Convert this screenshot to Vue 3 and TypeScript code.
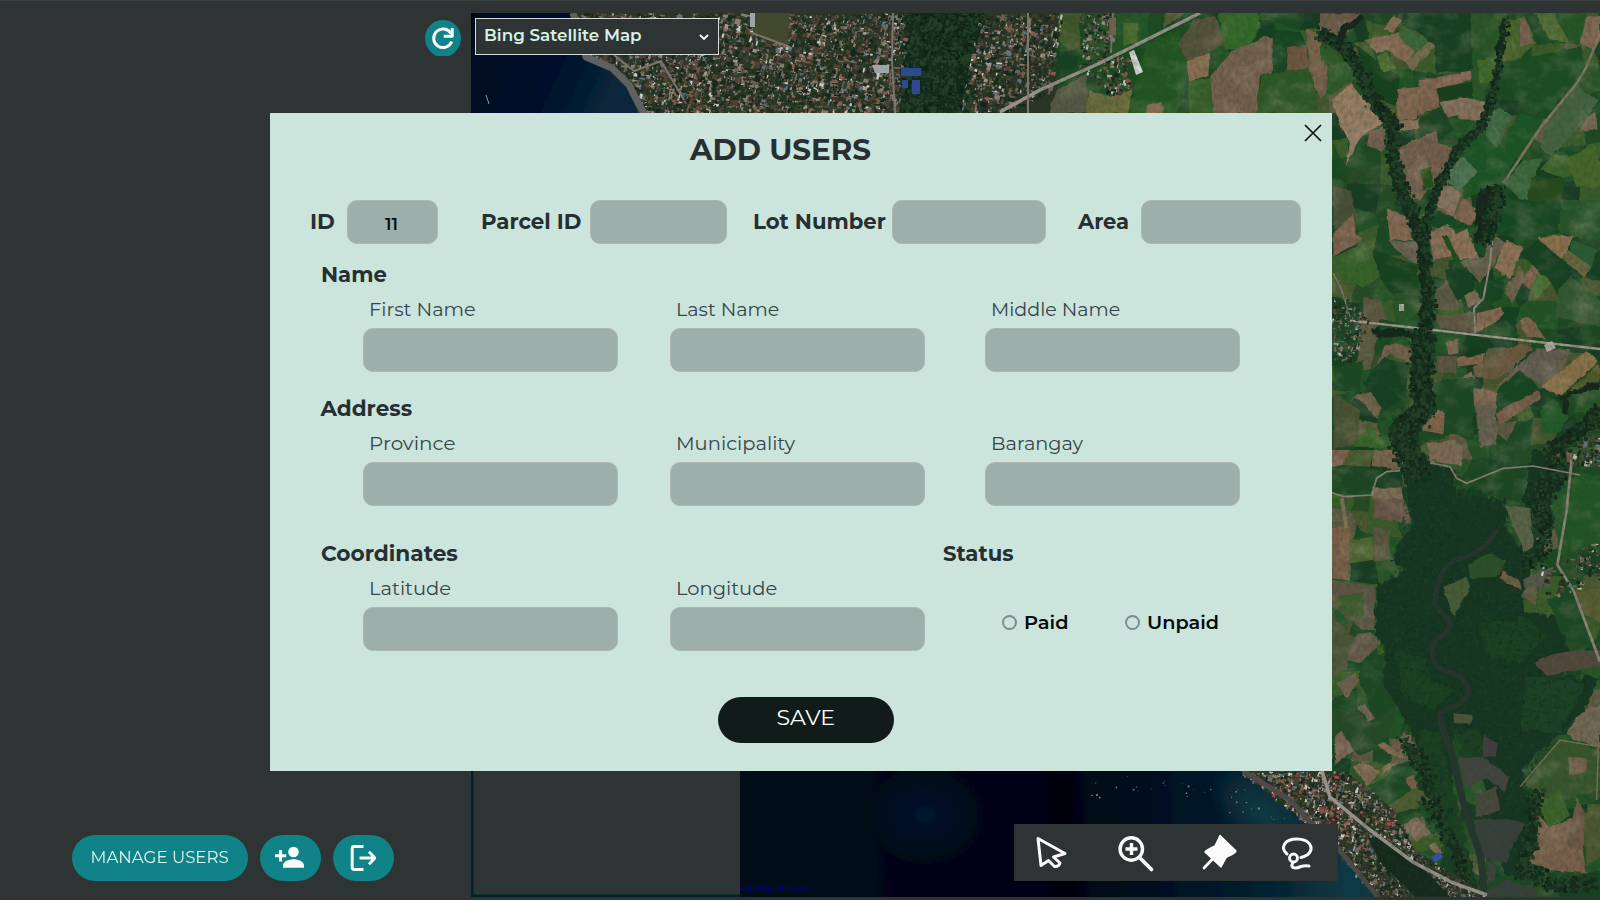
<script setup lang="ts">
import { ref, type Directive } from 'vue'

interface Patch { c: string; p: string }
interface Line { c: string; w: number; p: string }
interface Speck { c: string; d: string }
type Pt = [number, number]

// Stretches a label horizontally to a given advance width.
const vFit: Directive<HTMLElement, number> = {
  mounted(el, binding) {
    const natural = el.offsetWidth
    if (natural > 0) el.style.transform = `scaleX(${binding.value / natural})`
  },
}

const topFields = [
  { label: 'ID', w: 25, cls: 'f-id', value: '11' },
  { label: 'Parcel ID', w: 100, cls: 'f-parcel', value: '' },
  { label: 'Lot Number', w: 133, cls: 'f-lot', value: '' },
  { label: 'Area', w: 51, cls: 'f-area', value: '' },
]
const nameFields = [
  { label: 'First Name', w: 107 },
  { label: 'Last Name', w: 103 },
  { label: 'Middle Name', w: 129 },
]
const addressFields = [
  { label: 'Province', w: 87 },
  { label: 'Municipality', w: 119 },
  { label: 'Barangay', w: 92 },
]
const coordFields = [
  { label: 'Latitude', w: 82 },
  { label: 'Longitude', w: 101 },
]
const status = ref('')

function rng(seed: number): () => number {
  let s = seed
  return () => {
    s = (s * 1664525 + 1013904223) % 4294967296
    return s / 4294967296
  }
}
function parse(p: string): Pt[] {
  return p.split(' ').map((q) => q.split(',').map(Number) as Pt)
}
function inside(x: number, y: number, poly: Pt[]): boolean {
  let hit = false
  for (let i = 0, j = poly.length - 1; i < poly.length; j = i++) {
    const [xi, yi] = poly[i]
    const [xj, yj] = poly[j]
    if (yi > y !== yj > y && x < ((xj - xi) * (y - yi)) / (yj - yi) + xi) hit = !hit
  }
  return hit
}
const roofs = ['#a0958c', '#6f6052', '#c9cac8', '#8c5b50', '#534b42', '#1a2a1a', '#16241a', '#62707a', '#705e4b', '#22351f', '#877c70', '#304028', '#18291b', '#20321f', '#2c3a26', '#4f4234']
const leaves = ['#12291b', '#172e1e', '#0f2116', '#1c3a22', '#142c1c', '#213f27']
function scatter(area: string, count: number, seed: number, colours: string[], size: number): Speck[] {
  const poly = parse(area)
  const xs = poly.map((q) => q[0])
  const ys = poly.map((q) => q[1])
  const x0 = Math.min(...xs), x1 = Math.max(...xs), y0 = Math.min(...ys), y1 = Math.max(...ys)
  const r = rng(seed)
  const out = colours.map((c) => ({ c, d: '' }))
  for (let i = 0; i < count; i++) {
    const x = x0 + r() * (x1 - x0)
    const y = y0 + r() * (y1 - y0)
    const w = size * (0.3 + r() * r() * 1.5)
    const h = size * (0.3 + r() * r() * 1.5)
    const k = Math.floor(r() * colours.length)
    if (inside(x, y, poly)) out[k].d += `M${x.toFixed(1)} ${y.toFixed(1)}l${w.toFixed(1)} ${(h * 0.3).toFixed(1)}l${(-h * 0.3).toFixed(1)} ${h.toFixed(1)}l${(-w).toFixed(1)} ${(-h * 0.3).toFixed(1)}z`
  }
  return out
}
function along(path: string, spread: number, count: number, seed: number, colours: string[], size: number): Speck[] {
  const pts = parse(path)
  const r = rng(seed)
  const out = colours.map((c) => ({ c, d: '' }))
  for (let i = 0; i < count; i++) {
    const t = r() * (pts.length - 1)
    const n = Math.floor(t)
    const f = t - n
    const x = pts[n][0] + (pts[n + 1][0] - pts[n][0]) * f + (r() + r() - 1) * spread
    const y = pts[n][1] + (pts[n + 1][1] - pts[n][1]) * f + (r() + r() - 1) * spread
    const s = size * (0.4 + r() * 0.8)
    out[Math.floor(r() * colours.length)].d += `M${x.toFixed(1)} ${y.toFixed(1)}h${s.toFixed(1)}v${s.toFixed(1)}h${(-s).toFixed(1)}z`
  }
  return out
}
// Irregular quilt of crops under the main field shapes.
function quilt(x0: number, y0: number, x1: number, y1: number, cell: number, seed: number): Patch[] {
  const r = rng(seed)
  const crops = ['#1c4824', '#164020', '#225228', '#2b5529', '#1a4a26', '#3a5c2c', '#183c20', '#5e5a42', '#274b28', '#46562f', '#1d4a22']
  const cols = Math.ceil((x1 - x0) / cell) + 1
  const rows = Math.ceil((y1 - y0) / cell) + 1
  const g: Pt[][] = []
  for (let j = 0; j <= rows; j++) {
    g.push([])
    for (let i = 0; i <= cols; i++) g[j].push([x0 + (i - 0.5 + (r() - 0.5) * 0.7) * cell, y0 + (j - 0.5 + (r() - 0.5) * 0.7) * cell])
  }
  const out: Patch[] = []
  for (let j = 0; j < rows; j++) {
    for (let i = 0; i < cols; i++) {
      const c = crops[Math.floor(r() * crops.length)]
      out.push({ c, p: [g[j][i], g[j][i + 1], g[j + 1][i + 1], g[j + 1][i]].map((q) => q.map((v) => v.toFixed(1)).join(',')).join(' ') })
    }
  }
  return out
}
const quiltPatches = quilt(1040, 13, 1600, 897, 23, 41)

// Farmland between the upper edge and the middle of the east side (units of 1/3 px).
const northFields: Patch[] = [
  { c: '#6d5a48', p: '0,40 120,40 60,130 0,100' },
  { c: '#2f5a2a', p: '0,120 80,170 110,230 40,280 0,300' },
  { c: '#785c4b', p: '0,180 25,200 20,270 0,300' },
  { c: '#17431f', p: '100,130 240,230 230,320 160,290 130,200' },
  { c: '#8a6c57', p: '220,45 246,62 215,98 190,88' },
  { c: '#876955', p: '136,120 180,112 240,96 288,150 262,190 200,150 170,160' },
  { c: '#3e6837', p: '240,70 340,135 290,160 236,110' },
  { c: '#746c50', p: '286,160 330,125 347,138 275,216 258,190' },
  { c: '#4a6a2c', p: '168,170 200,155 226,206 190,218' },
  { c: '#134121', p: '250,40 450,40 460,210 350,220 345,135 245,65' },
  { c: '#2b5528', p: '450,40 560,40 540,170 460,160' },
  { c: '#40692c', p: '470,180 530,170 520,240 480,250' },
  { c: '#4b652f', p: '560,60 620,50 650,130 570,200 545,190' },
  { c: '#78624e', p: '600,60 620,50 640,130 600,140' },
  { c: '#526c36', p: '640,40 700,40 750,128 680,120' },
  { c: '#1d4822', p: '610,40 645,40 690,120 650,125' },
  { c: '#275527', p: '700,40 800,40 780,140 750,125' },
  { c: '#806652', p: '795,50 840,45 840,120 825,150 778,135' },
  { c: '#1b4d22', p: '540,190 780,140 800,200 660,370 560,260' },
  { c: '#846753', p: '232,268 300,260 290,355 232,362' },
  { c: '#806250', p: '300,240 352,234 360,320 292,348' },
  { c: '#8b6a57', p: '352,232 450,212 452,242 354,265' },
  { c: '#87705c', p: '362,306 430,285 495,310 490,360 412,358 412,345 375,355' },
  { c: '#16401d', p: '352,266 456,245 460,290 358,305' },
  { c: '#8b6f59', p: '232,362 294,357 298,385 234,395' },
  { c: '#1a4520', p: '300,350 370,330 400,390 350,430 290,400' },
  { c: '#987c63', p: '36,300 92,250 124,290 160,310 190,335 195,370 150,390 125,410 110,430 95,470 78,500 84,460 90,430 60,370' },
  { c: '#756050', p: '150,390 190,380 204,440 180,455 140,440' },
  { c: '#1e4b22', p: '40,430 75,500 120,430 180,450 180,495 40,520' },
  { c: '#765f4d', p: '235,440 350,392 355,430 395,440 380,500 330,560 300,602 270,590 240,510' },
  { c: '#254f1f', p: '300,510 335,500 340,560 310,570' },
  { c: '#3a673f', p: '500,350 540,322 580,350 530,445 497,415' },
  { c: '#1d5427', p: '430,440 495,400 530,445 600,340 670,360 540,550 430,600' },
  { c: '#4b7251', p: '375,520 430,472 474,515 420,575 372,545' },
  { c: '#88715f', p: '350,610 372,552 425,578 400,650 350,615' },
  { c: '#846551', p: '400,650 430,595 478,630 450,680' },
  { c: '#174620', p: '330,620 400,655 430,690 400,700 330,680' },
  { c: '#446340', p: '690,350 770,255 835,300 800,360 690,470 660,440' },
  { c: '#756852', p: '800,350 830,340 832,390 780,395' },
  { c: '#3b673d', p: '550,550 610,480 665,475 620,615' },
  { c: '#3d642d', p: '660,510 700,460 745,465 770,520 730,535' },
  { c: '#264c1f', p: '635,530 730,535 720,600 620,615' },
  { c: '#46662b', p: '740,480 820,430 840,480 840,560 770,560' },
  { c: '#174622', p: '540,590 700,610 720,700 600,720 525,700' },
  { c: '#26542b', p: '720,600 840,600 840,720 720,700' },
  { c: '#856752', p: '200,625 270,650 280,720 210,720' },
  { c: '#6a6050', p: '205,720 290,725 315,790 290,795 230,750' },
  { c: '#4b5037', p: '40,560 90,570 112,650 40,690' },
  { c: '#7e614d', p: '40,700 100,640 105,700 130,720 40,770' },
  { c: '#38632b', p: '45,770 135,728 180,830 125,862 50,810' },
  { c: '#19431f', p: '160,750 290,795 300,880 210,880 180,830' },
  { c: '#8a6e58', p: '328,700 380,672 402,690 430,760 340,780' },
  { c: '#8e7157', p: '395,710 440,685 478,775 420,780' },
  { c: '#204b22', p: '365,710 380,705 415,775 405,785' },
  { c: '#665e4c', p: '420,785 490,770 510,700 560,730 480,850' },
  { c: '#8e7157', p: '520,800 560,722 610,740 570,838' },
  { c: '#6e5c48', p: '550,880 600,795 615,830 580,908' },
  { c: '#8d6f4e', p: '655,712 760,705 745,750 720,780' },
  { c: '#66653e', p: '720,780 745,750 815,800 795,836' },
  { c: '#2b5b30', p: '760,720 830,750 815,800 750,755' },
  { c: '#7f5b48', p: '603,845 635,795 660,815 630,865' },
  { c: '#4b6f36', p: '630,865 660,815 692,848 650,900' },
  { c: '#154020', p: '600,760 655,720 790,830 720,900 690,840' },
  { c: '#345930', p: '715,865 755,830 840,900 840,980 705,950' },
  { c: '#5b5943', p: '340,870 405,840 415,930 350,930' },
  { c: '#174021', p: '370,810 440,800 465,860 410,900' },
  { c: '#836b58', p: '430,885 465,868 480,900 450,925' },
  { c: '#174520', p: '510,850 560,820 540,900 490,915' },
  { c: '#856753', p: '470,940 545,920 553,940 510,980 470,998' },
  { c: '#605843', p: '350,950 460,935 465,1000 360,985' },
  { c: '#80644e', p: '600,960 630,950 675,1015 620,1010' },
  { c: '#244e25', p: '490,985 560,960 600,1010 480,1005' },
  { c: '#5b5741', p: '130,890 180,900 200,960 130,955' },
  { c: '#745f4e', p: '190,1040 230,1030 270,1045 278,1090 210,1060 165,1115' },
  { c: '#154020', p: '190,1070 270,1090 260,1190 180,1240 130,1150' },
  { c: '#1d4822', p: '40,1100 130,1080 120,1180 40,1170' },
  { c: '#705f4c', p: '100,1190 150,1172 185,1225 170,1255 130,1210' },
  { c: '#485230', p: '40,1180 120,1230 110,1330 40,1350' },
  { c: '#3b652c', p: '100,1340 145,1272 205,1340' },
  { c: '#806450', p: '380,1030 415,1015 415,1060 385,1065' },
  { c: '#143a1c', p: '418,1042 490,1042 480,1070 416,1070' },
  { c: '#82654d', p: '412,1074 495,1062 493,1090 412,1100' },
  { c: '#5b5643', p: '350,1068 412,1068 408,1120 350,1112' },
  { c: '#6c583f', p: '458,1100 600,1030 645,1045 530,1140 465,1130' },
  { c: '#846d55', p: '380,1165 455,1115 465,1135' },
  { c: '#706452', p: '520,1175 600,1110 590,1085 625,1060' },
  { c: '#625b4f', p: '590,1105 650,1045 750,1050 730,1110 665,1160' },
  { c: '#8b7049', p: '665,1160 800,1050 835,1085 720,1190' },
  { c: '#535b2b', p: '745,1178 835,1090 840,1140' },
  { c: '#1a4822', p: '320,1150 460,1130 460,1330 350,1270' },
  { c: '#806752', p: '460,1165 530,1172 525,1260 462,1220' },
  { c: '#686050', p: '465,1215 527,1215 530,1330 480,1343' },
  { c: '#7a5c48', p: '530,1240 655,1172 662,1195 537,1275' },
  { c: '#164420', p: '530,1170 600,1115 660,1170 540,1230' },
  { c: '#245a2a', p: '660,1230 700,1195 745,1250 720,1300 670,1300' },
  { c: '#84634e', p: '303,1290 355,1225 375,1240 370,1303' },
]
const northRoads: Line[] = [
  { c: '#81765f', w: 8, p: '840,100 800,200 770,250 660,385 550,550' },
  { c: '#91897c', w: 6, p: '520,690 510,790 490,895 462,925 466,1000' },
  { c: '#a39b90', w: 7, p: '90,962 300,985 480,1006 840,1047' },
  { c: '#887e70', w: 4, p: '40,820 65,870 90,950' },
]
const northWoods: Line[] = [
  { c: '#15291b', w: 34, p: '0,100 80,145 130,230 150,290 215,370 215,470 240,560 275,640 310,740 320,900 310,990' },
  { c: '#15291b', w: 17, p: '555,50 535,190 510,300 480,380 410,440 360,540 320,640 310,740' },
  { c: '#15291b', w: 60, p: '310,1000 300,1100 310,1220 240,1290 250,1350' },
  { c: '#15281b', w: 24, p: '160,1000 240,1000 310,1010' },
  { c: '#15281b', w: 40, p: '700,1350 780,1290 840,1230' },
  { c: '#15281b', w: 18, p: '740,1240 730,1190 840,1150' },
  { c: '#15281b', w: 20, p: '60,130 70,90 130,50' },
  { c: '#12261a', w: 50, p: '525,555 520,600 505,650 485,730' },
  { c: '#12261a', w: 34, p: '495,575 480,680' },
]

// Farmland, forest and marsh in the lower half of the east side (units of 1/3 px).
const southFields: Patch[] = [
  { c: '#7e624d', p: '36,0 90,0 70,45 36,50' },
  { c: '#4a5c30', p: '90,0 160,0 150,50 70,45' },
  { c: '#7a634f', p: '160,0 260,0 240,60 155,48' },
  { c: '#7f6955', p: '320,-20 400,-30 430,0 425,45 330,35' },
  { c: '#1e4723', p: '36,55 190,55 155,130 115,140 36,128' },
  { c: '#7d6957', p: '160,112 245,115 250,150 157,145' },
  { c: '#69564c', p: '160,145 255,150 275,222 160,205' },
  { c: '#7b6049', p: '36,232 90,225 80,390 36,385' },
  { c: '#48622e', p: '90,270 160,260 160,330 90,340' },
  { c: '#5a573f', p: '160,230 210,240 205,330 160,335' },
  { c: '#5e5645', p: '36,390 165,405 165,540 130,540 36,470' },
  { c: '#405c2d', p: '50,440 130,430 130,510 60,490' },
  { c: '#665b49', p: '100,560 150,545 180,580 120,640 80,630' },
  { c: '#4e5538', p: '36,500 100,560 80,660 36,680' },
  { c: '#706250', p: '50,700 105,670 118,690 80,745' },
  { c: '#1c4824', p: '120,640 200,600 210,760 170,800 120,700' },
  { c: '#746452', p: '115,770 135,762 162,805 145,818' },
  { c: '#274826', p: '50,780 115,775 190,880 120,920 60,850' },
  { c: '#7d6552', p: '45,860 65,845 100,900 45,945' },
  { c: '#826a56', p: '98,950 130,935 180,965 140,1005' },
  { c: '#866b55', p: '172,885 190,875 230,905 260,895 250,925 220,920' },
  { c: '#866b55', p: '183,955 215,933 225,945 193,967' },
  { c: '#75604e', p: '212,895 255,850 285,860 250,900' },
  { c: '#1b4822', p: '145,1010 240,950 300,960 310,1010 200,1070' },
  { c: '#7d604d', p: '256,985 280,975 298,1010 278,1025' },
  { c: '#505c30', p: '200,1070 290,1010 350,1055 230,1090' },
  { c: '#786451', p: '248,1125 290,1098 330,1150 290,1180' },
  { c: '#1f4b26', p: '290,1050 350,1060 390,1150 330,1150' },
  { c: '#836e50', p: '325,1190 345,1173 365,1205 350,1215' },
  { c: '#1d4723', p: '400,100 440,60 620,50 610,160 480,130' },
  { c: '#225428', p: '690,130 750,70 840,75 840,270 720,320' },
  { c: '#6c5747', p: '700,0 760,0 750,60 705,60' },
  { c: '#1c4a25', p: '680,450 760,420 820,600 740,560' },
  { c: '#585b32', p: '765,425 840,415 840,520 790,490' },
  { c: '#736654', p: '740,850 770,800 800,775 840,765 840,890 760,870' },
  { c: '#38562d', p: '610,1000 720,870 840,900 840,1020 700,1060' },
  { c: '#786150', p: '745,920 800,925 800,970 745,975' },
  { c: '#3d642b', p: '650,1060 720,1020 750,1100 690,1130' },
  { c: '#7a604b', p: '650,1090 690,1130 770,1100 800,1270 690,1260 610,1230' },
  { c: '#705946', p: '770,1040 810,1120 790,1200 740,1190' },
  { c: '#4e5830', p: '790,1090 840,1080 840,1220 800,1250' },
]
// Clearings and wetland that lie inside the forest.
const marsh: Patch[] = [
  { c: '#2f5029', p: '445,340 510,310 560,330 530,380 450,385' },
  { c: '#6e6044', p: '545,360 600,395 605,420 540,385' },
  { c: '#4a5c38', p: '370,410 440,380 450,410 400,500' },
  { c: '#57594a', p: '610,385 700,350 690,410 612,410' },
  { c: '#5a6347', p: '556,165 630,175 640,290 615,305 580,230' },
  { c: '#55493e', p: '645,640 690,615 740,605 840,600 840,650 760,660 680,675' },
  { c: '#42453f', p: '415,925 485,920 570,980 555,1025 500,985 430,1010' },
  { c: '#443e42', p: '490,855 535,885 530,920 485,920' },
  { c: '#49493d', p: '465,1035 530,1010 540,1080 470,1105' },
  { c: '#39403b', p: '460,1110 550,1105 620,1120 580,1180 560,1240 480,1220' },
  { c: '#3f453c', p: '500,1230 528,1250 525,1290 505,1300' },
  { c: '#39413a', p: '500,1320 560,1290 640,1310 650,1340 500,1340' },
  { c: '#50553a', p: '400,790 458,795 450,820 403,820' },
]
const southWoods: Patch[] = [
  { c: '#173421', p: '250,50 310,0 340,45 400,60 410,140 555,150 560,230 600,300 690,250 610,160 640,0 700,0 690,240 610,410 610,480 700,500 750,600 650,640 700,680 840,680 800,770 700,870 610,950 610,1020 650,1060 650,1200 620,1240 650,1290 560,1280 520,1180 500,1010 400,840 400,1050 480,1340 440,1320 320,1000 290,880 250,800 190,700 200,600 165,540 170,410 260,360 215,330 275,220' },
  { c: '#1a4023', p: '390,830 480,840 500,930 430,920' },
  { c: '#1b4225', p: '620,680 740,690 800,700 720,850 600,840' },
  { c: '#1a3f24', p: '480,520 620,500 680,560 600,640 500,620' },
  { c: '#1b4024', p: '230,600 310,620 340,700 400,720 340,780 250,740' },
  { c: '#1b4024', p: '290,840 360,850 420,1100 460,1300 420,1280 330,1000' },
]
const southRoads: Line[] = [
  { c: '#8b8474', w: 5, p: '36,128 72,140 155,135 170,85 200,65 240,62' },
  { c: '#8d8373', w: 5, p: '330,38 390,50 410,85 440,100 550,55 640,48 780,75' },
  { c: '#8d8676', w: 8, p: '755,30 740,180 712,345 760,420 840,635' },
  { c: '#7d7258', w: 12, p: '65,145 80,235' },
  { c: '#7d7258', w: 4, p: '600,1010 720,870 835,890 830,1050' },
]
const townAreas: [string, number, number][] = [
  ['575,13 905,13 900,113 645,113 620,70 590,55', 5200, 4],
  ['980,13 1062,13 1050,90 1000,113 960,113', 1300, 4],
  ['1080,13 1112,13 1110,60 1080,68', 220, 3.4],
  ['1085,70 1130,50 1130,85 1112,95', 260, 3.4],
  ['1240,771 1345,771 1394,810 1415,850 1490,897 1378,897 1338,852 1290,810', 5600, 3.4],
  ['1332,300 1345,295 1370,320 1352,360 1332,360', 220, 3.4],
  ['1565,560 1600,535 1600,580', 130, 3],
  ['1540,565 1585,580 1575,595 1545,595', 50, 4],
  ['1572,450 1600,450 1600,464 1572,462', 60, 4],
  ['1590,425 1600,418 1600,450 1575,450', 50, 4],
]
const town = townAreas.flatMap(([a, n, s], i) => scatter(a, n, 77 + i * 31, roofs, s))
const reds = scatter('1240,771 1345,771 1400,830 1405,870 1300,812', 260, 9, ['#b04648', '#c9c6c4', '#8f3d3d'], 3)
const topForest = scatter('900,13 985,13 975,113 900,113', 2200, 5, leaves, 4)
const canopy = scatter('1405,466 1420,450 1455,470 1505,500 1520,560 1525,610 1560,650 1590,680 1560,730 1525,780 1530,880 1500,830 1480,760 1450,730 1450,800 1470,890 1430,830 1405,740 1380,640 1380,590 1400,560', 9000, 12, ['#163120', '#193a23', '#1c4026', '#173522', '#1b3d24'], 3)
const edgeTrees = [
  ...along('1320,33 1347,48 1363,77 1370,97 1392,123 1392,157 1400,187 1412,213 1423,247 1427,300 1423,330', 9, 1100, 3, leaves, 3.4),
  ...along('1505,17 1498,63 1490,100 1480,127 1457,147 1440,180 1427,213 1423,247', 5, 550, 4, leaves, 3),
  ...along('1423,333 1420,367 1423,407 1400,430 1403,450 1415,470', 15, 1000, 6, leaves, 3.4),
  ...along('1497,190 1492,210 1484,240', 10, 260, 19, leaves, 3.4),
  ...along('1553,450 1560,470 1535,500 1540,540 1530,560', 14, 700, 8, leaves, 3.4),
  ...along('1554,450 1580,430 1600,410', 9, 260, 15, leaves, 3.4),
  ...along('1402,740 1420,760 1430,800 1455,850 1465,885', 9, 450, 16, leaves, 3.4),
  ...along('1535,790 1530,840 1520,870 1560,885 1590,880', 10, 500, 17, leaves, 3.4),
]
const boats = along('1090,785 1150,790 1220,795 1260,810 1290,815', 20, 36, 21, ['#7b8c90'], 1.5)
</script>

<template>
  <div class="page">
    <svg class="map" viewBox="471 13 1129 884" preserveAspectRatio="none">
      <defs>
        <linearGradient id="seaTop" x1="0" y1="0" x2="1" y2="0.3">
          <stop offset="0" stop-color="#02061c" />
          <stop offset="0.6" stop-color="#030f2a" />
          <stop offset="1" stop-color="#08283a" />
        </linearGradient>
        <linearGradient id="seaLow" gradientUnits="userSpaceOnUse" x1="740" y1="860" x2="1345" y2="830">
          <stop offset="0" stop-color="#020f18" />
          <stop offset="0.25" stop-color="#020616" />
          <stop offset="0.55" stop-color="#010511" />
          <stop offset="0.75" stop-color="#031426" />
          <stop offset="0.9" stop-color="#062733" />
          <stop offset="1" stop-color="#0b3845" />
        </linearGradient>
        <radialGradient id="shoal"><stop offset="0" stop-color="#0e3b44" /><stop offset="1" stop-color="#0e3b44" stop-opacity="0" /></radialGradient>
        <radialGradient id="deepBlue"><stop offset="0" stop-color="#03142c" /><stop offset="1" stop-color="#03142c" stop-opacity="0" /></radialGradient>
        <filter id="rough" x="-5%" y="-5%" width="110%" height="110%">
          <feTurbulence type="fractalNoise" baseFrequency="0.12" numOctaves="2" seed="4" />
          <feDisplacementMap in="SourceGraphic" scale="10" xChannelSelector="R" yChannelSelector="G" />
        </filter>
        <filter id="edges" x="-2%" y="-2%" width="104%" height="104%">
          <feTurbulence type="fractalNoise" baseFrequency="0.09" numOctaves="2" seed="14" />
          <feDisplacementMap in="SourceGraphic" scale="4" xChannelSelector="R" yChannelSelector="G" />
          <feGaussianBlur stdDeviation="0.5" />
        </filter>
        <filter id="soft"><feGaussianBlur stdDeviation="0.6" /></filter>
        <filter id="grain" x="0" y="0" width="100%" height="100%">
          <feTurbulence type="fractalNoise" baseFrequency="0.25 0.18" numOctaves="4" seed="8" />
          <feColorMatrix values="0 0 0 0 0.02  0 0 0 0 0.05  0 0 0 0 0.02  1.1 0 0 0 -0.38" />
        </filter>
        <filter id="soil" x="0" y="0" width="100%" height="100%">
          <feTurbulence type="fractalNoise" baseFrequency="0.035 0.05" numOctaves="4" seed="31" />
          <feColorMatrix values="0 0 0 0 0.42  0 0 0 0 0.37  0 0 0 0 0.27  2.2 0 0 0 -1.05" />
        </filter>
      </defs>

      <rect x="471" y="13" width="1129" height="884" fill="#1c4524" />
      <g filter="url(#edges)">
        <polygon v-for="(f, i) in quiltPatches" :key="i" :points="f.p" :fill="f.c" />
        <polygon points="560,5 1062,5 1060,120 630,120" fill="#2a3628" />
        <polygon points="690,55 706,58 700,120 684,120 694,80" fill="#5b4939" />
        <polygon points="900,5 985,5 975,120 900,120" fill="#162c1c" />
        <g transform="translate(800 0) scale(0.33333)">
          <polygon points="775,20 1240,20 1240,340 770,340" fill="#1f4c23" />
          <polygon points="780,20 840,20 840,140 815,155 775,120" fill="#40592b" />
          <polygon points="765,155 835,150 830,200 760,230" fill="#173f22" />
          <polygon points="770,270 860,220 865,340 745,340" fill="#575844" />
          <polygon points="865,270 930,290 995,265 985,340 860,340" fill="#6b6c3a" />
          <polygon points="940,20 1050,20 1040,120 940,160" fill="#235425" />
          <polygon points="970,68 1015,70 1010,130 970,140" fill="#44692c" />
          <polygon points="1040,130 1140,90 1165,210 1130,340 985,340" fill="#205624" />
          <polygon points="1100,20 1180,20 1090,85" fill="#595b39" />
          <polygon points="1180,60 1245,45 1270,130 1225,160 1160,180 1135,130" fill="#57523b" />
          <polygon points="1157,180 1230,160 1225,225 1168,245" fill="#876c50" />
          <polygon points="1250,25 1370,25 1385,80 1330,150 1275,150" fill="#356a29" />
          <polygon points="1230,230 1290,160 1390,110 1445,125 1415,225 1380,230 1370,340 1240,340" fill="#74614d" />
          <polygon points="1165,245 1230,235 1240,340 1170,340" fill="#37602b" />
          <polygon points="1420,90 1500,95 1520,135 1465,140 1460,215 1415,225" fill="#164620" />
          <polygon points="1465,140 1520,135 1525,200 1460,212" fill="#6f5442" />
          <polygon points="1385,225 1530,205 1560,340 1370,340" fill="#2e5926" />
          <polygon points="1520,90 1560,100 1560,300 1530,215" fill="#7a624e" />
          <polygon points="1040,320 1085,305 1090,340 1040,340" fill="#85694f" />
        </g>
        <g transform="translate(1320 0) scale(0.33333)">
          <polygon v-for="(f, i) in northFields" :key="i" :points="f.p" :fill="f.c" />
        </g>
        <g transform="translate(1320 450) scale(0.33333)">
          <polygon v-for="(f, i) in southFields" :key="i" :points="f.p" :fill="f.c" />
        </g>
      </g>
      <rect x="1060" y="13" width="540" height="884" filter="url(#soil)" opacity="0.35" />
      <g filter="url(#rough)">
        <g transform="translate(1320 0) scale(0.33333)">
          <polyline v-for="(l, i) in northWoods" :key="i" :points="l.p" :stroke="l.c" :stroke-width="l.w" fill="none" />
        </g>
        <g transform="translate(1320 450) scale(0.33333)">
          <polygon v-for="(f, i) in southWoods" :key="i" :points="f.p" :fill="f.c" />
        </g>
      </g>
      <g filter="url(#soft)">
        <g transform="translate(1320 0) scale(0.33333)">
          <polyline v-for="(l, i) in northRoads" :key="i" :points="l.p" :stroke="l.c" :stroke-width="l.w" fill="none" />
        </g>
        <g><path v-for="(s, i) in topForest" :key="i" :d="s.d" :fill="s.c" /></g>
        <g opacity="0.7"><path v-for="(s, i) in canopy" :key="i" :d="s.d" :fill="s.c" /></g>
        <g><path v-for="(s, i) in edgeTrees" :key="i" :d="s.d" :fill="s.c" /></g>
      </g>
      <g filter="url(#edges)">
        <g transform="translate(1320 450) scale(0.33333)">
          <polygon v-for="(f, i) in marsh" :key="i" :points="f.p" :fill="f.c" />
        </g>
      </g>
      <g filter="url(#soft)">
        <g transform="translate(1320 450) scale(0.33333)">
          <path class="river" d="M530 240 Q490 310 430 322 Q350 340 345 460 Q350 480 385 505 Q405 540 345 570 Q320 640 370 660 Q450 680 445 730 Q430 765 365 785 Q345 800 380 880" />
          <path class="river wide" d="M362 800 Q370 860 400 920 Q430 1080 465 1170 Q495 1240 488 1330" />
          <polyline v-for="(l, i) in southRoads" :key="i" :points="l.p" :stroke="l.c" :stroke-width="l.w" fill="none" />
        </g>

        <polygon points="740,771 1245,771 1290,800 1315,825 1338,852 1378,897 740,897" fill="url(#seaLow)" />
        <ellipse cx="925" cy="815" rx="60" ry="50" fill="url(#deepBlue)" />
        <ellipse cx="1262" cy="812" rx="60" ry="34" fill="url(#shoal)" transform="rotate(38 1262 812)" />
        <polygon points="1240,771 1345,771 1394,810 1415,850 1490,897 1378,897 1338,852 1290,810" fill="#2f3829" />
        <polygon points="471,5 568,5 582,55 605,62 624,80 632,97 640,120 471,120" fill="url(#seaTop)" />
        <g><path v-for="(s, i) in town" :key="i" :d="s.d" :fill="s.c" /></g>
        <g><path v-for="(s, i) in reds" :key="i" :d="s.d" :fill="s.c" /></g>
        <g><path v-for="(s, i) in boats" :key="i" :d="s.d" :fill="s.c" /></g>
        <polygon points="753,13 790,13 788,45 770,40 753,32" fill="#42492f" />
        <polygon points="1368,838 1385,838 1430,875 1450,897 1415,897 1380,862" fill="#16291d" />
        <path class="beach" d="M573 13 L586 57 L612 68 L629 85 L636 99 L645 115" />
        <path class="beach thin" d="M1243 771 L1290 800 L1313 825 L1341 852 L1378 897" />
        <path class="road" d="M614 55 L634 71 L661 61 L684 100" />
        <path class="road big" d="M1200 13 L1100 63 L1040 90 L1000 112" />
        <path class="road" d="M893 10 L892 60 L895 113 M1028 10 L1028 113" />
        <path class="road big" d="M1322 771 L1330 797 L1370 830 L1413 862 L1453 883 L1487 895" />
        <path class="road" d="M1113 13 L1111 53 M752 33 L790 47" />
        <rect x="1109" y="18" width="7" height="17" fill="#75634e" />
        <polygon points="1129,52 1134,50 1143,72 1136,75" fill="#d5d9d8" />
        <path d="M901 68h20v8h-20z M912 80h8v14h-8z M902 80h6v8h-6z" fill="#2d4a92" />
        <path d="M872 65h17v8h-14z M750 13h5v14h-5z" fill="#9da5a8" />
        <path d="M1431 857l8-5 4 5-8 6z" fill="#3852a6" />
        <path d="M486 95l3 9" stroke="#8aa0aa" />
        <rect x="1399" y="304" width="5" height="7" fill="#b4b5ae" />
        <polygon points="1544,345 1552,341 1556,348 1547,352" fill="#b6aaa3" />
      </g>
      <rect x="1040" y="13" width="560" height="758" filter="url(#grain)" opacity="0.55" />
      <rect x="1360" y="771" width="240" height="126" filter="url(#grain)" opacity="0.55" />
      <path d="M471 771h2.6v123.500h266.400v2.500h-269z" fill="#00202c" />
      <rect x="473.600" y="760" width="266" height="134" fill="#2d3433" />
    </svg>

    <header class="map-bar">
      <button class="refresh" aria-label="Refresh">
        <svg width="36" height="36" viewBox="0 0 36 36">
          <path d="M0 18a18 18 0 0 1 36 0c0 8-4.500 14-11.500 18h-13C4.500 32 0 26 0 18z" fill="#0f8388" />
          <path d="M26 13.500A9.300 9.300 0 1 0 26.700 21.500" class="stroke" />
          <path d="M27.200 8v8.200h-8.500" class="stroke" />
        </svg>
      </button>
      <button class="select">
        <span v-fit="158" class="fit">Bing Satellite Map</span>
        <svg width="10" height="7" viewBox="0 0 10 7"><path d="M1 1l4 4 4-4" fill="none" stroke="#f2fbf8" stroke-width="1.900" /></svg>
      </button>
    </header>

    <section class="dialog">
      <button class="close" aria-label="Close">
        <svg width="18" height="18" viewBox="0 0 18 18"><path d="M1 1l16 16M17 1L1 17" stroke="#0b1111" stroke-width="1.700" /></svg>
      </button>
      <h1 class="title"><span v-fit="181" class="fit">ADD USERS</span></h1>

      <div class="row-top">
        <div v-for="f in topFields" :key="f.label" class="top-field" :class="f.cls">
          <span class="strong"><span v-fit="f.w" class="fit">{{ f.label }}</span></span>
          <div class="input">{{ f.value }}</div>
        </div>
      </div>

      <div class="group g-name">
        <h2 class="strong"><span v-fit="66" class="fit">Name</span></h2>
        <div class="fields">
          <div v-for="f in nameFields" :key="f.label" class="field">
            <span class="sub"><span v-fit="f.w" class="fit">{{ f.label }}</span></span>
            <div class="input"></div>
          </div>
        </div>
      </div>
      <div class="group">
        <h2 class="strong"><span v-fit="92" class="fit">Address</span></h2>
        <div class="fields">
          <div v-for="f in addressFields" :key="f.label" class="field">
            <span class="sub"><span v-fit="f.w" class="fit">{{ f.label }}</span></span>
            <div class="input"></div>
          </div>
        </div>
      </div>
      <div class="last-row">
        <div class="group g-coords">
          <h2 class="strong"><span v-fit="137" class="fit">Coordinates</span></h2>
          <div class="fields">
            <div v-for="f in coordFields" :key="f.label" class="field">
              <span class="sub"><span v-fit="f.w" class="fit">{{ f.label }}</span></span>
              <div class="input"></div>
            </div>
          </div>
        </div>
        <div class="status">
          <h2 class="strong"><span v-fit="71" class="fit">Status</span></h2>
          <div class="radios">
            <button class="radio r-paid" @click="status = 'paid'">
              <i :class="{ on: status === 'paid' }"></i><span v-fit="45" class="fit">Paid</span>
            </button>
            <button class="radio" @click="status = 'unpaid'">
              <i :class="{ on: status === 'unpaid' }"></i><span v-fit="72" class="fit">Unpaid</span>
            </button>
          </div>
        </div>
      </div>
      <button class="save"><span v-fit="59" class="fit mid">SAVE</span></button>
    </section>

    <p class="credit">courtesy of NASA</p>

    <nav class="actions">
      <button class="pill manage"><span v-fit="138" class="fit mid">MANAGE USERS</span></button>
      <button class="pill small" aria-label="Add user">
        <svg width="30" height="24" viewBox="0 0 30 24">
          <path d="M0 9.700h11.200M5.600 4v11.400" stroke="#fafafa" stroke-width="3" />
          <circle cx="18.500" cy="6" r="5.300" fill="#fafafa" />
          <path d="M8 21.800v-2.600c0-3.800 6-6 10.500-6s10.500 2.200 10.500 6v2.600z" fill="#fafafa" />
        </svg>
      </button>
      <button class="pill small" aria-label="Sign out">
        <svg width="26" height="28" viewBox="0 0 26 28">
          <path d="M13.500 2.500H4a1.800 1.800 0 0 0-1.800 1.800v19.400A1.800 1.800 0 0 0 4 25.500h9.500" class="stroke" />
          <path d="M9.500 14h15M19 7.800l6 6.200-6 6.200" class="stroke" />
        </svg>
      </button>
    </nav>

    <nav class="tools">
      <svg width="324" height="57" viewBox="0 0 324 57">
        <g fill="none" stroke="#fafafa" stroke-width="3" stroke-linejoin="round" stroke-linecap="round">
          <path d="M24 14.500L51 29.500L39.500 33L46 39Q45 43 40.500 42.500L34.500 36.500L27 41.500Z" />
          <circle cx="117.300" cy="25" r="11.200" stroke-width="3.400" />
          <path d="M111.500 25h12M117.500 19v12" stroke-linecap="butt" stroke-width="3.400" />
          <path d="M126 34L137.500 45.500" stroke-width="3.800" />
          <path d="M190 44L199 34.500" stroke-width="2.800" />
          <path d="M273 30C266 24 270 15 283 15S300.500 24 294 30.500Q290 33 287 33.500" stroke-width="3" />
          <circle cx="279.500" cy="34" r="4" stroke-width="2.900" />
          <path d="M279 38.500Q276 43.500 281 44Q283 44.200 287 42.500Q290 41.500 295 42" stroke-width="3" />
        </g>
        <path d="M206 11.500L222 27Q222 29 212.500 33L207 43L191 28Q192 26 201 22Z" fill="#fafafa" stroke="#fafafa" stroke-width="1.500" stroke-linejoin="round" />
      </svg>
    </nav>
  </div>
</template>

<style>
body {
  margin: 0;
  background: #2d3433;
}
</style>

<style scoped>
.page {
  position: relative;
  box-sizing: border-box;
  width: 1600px;
  height: 900px;
  overflow: hidden;
  background: #2d3433;
  border-top: 1px solid #3a4342;
  font-family: Montserrat, Inter, "Open Sans", sans-serif;
  color: #263032;
}
button {
  font: inherit;
  padding: 0;
  border: 0;
  background: none;
  color: inherit;
}
svg {
  display: block;
}
h1,
h2,
p {
  margin: 0;
}
.fit {
  display: inline-block;
  white-space: nowrap;
  transform-origin: 0 50%;
}
.fit.mid {
  transform-origin: 50% 50%;
}
.stroke {
  fill: none;
  stroke: #fafafa;
  stroke-width: 3;
  stroke-linejoin: round;
}
.map {
  position: absolute;
  left: 471px;
  top: 12px;
  width: 1129px;
  height: 884px;
}
.river {
  fill: none;
  stroke: #28342f;
  stroke-width: 15;
}
.river.wide {
  stroke-width: 21;
}
.beach {
  fill: none;
  stroke: #5f6060;
  stroke-width: 7;
  stroke-linejoin: round;
}
.beach.thin {
  stroke: #4e4a46;
  stroke-width: 5;
}
.road {
  fill: none;
  stroke: #7b756d;
  stroke-width: 2;
}
.road.big {
  stroke: #96928a;
  stroke-width: 3.5;
}
.map-bar {
  position: absolute;
  left: 425px;
  top: 17px;
  display: flex;
  gap: 14px;
}
.refresh {
  margin-top: 2px;
  height: 36px;
  width: 36px;
}
.select {
  box-sizing: border-box;
  display: flex;
  align-items: center;
  justify-content: space-between;
  width: 244px;
  height: 37px;
  padding: 0 9px 4px 8px;
  border: 1px solid #d5dcda;
  background: #2d3433;
  color: #d8f0e8;
  font-size: 17px;
  line-height: 22px;
  font-weight: 600;
}
.select svg {
  margin-top: 5px;
}
.dialog {
  position: absolute;
  left: 270px;
  top: 112px;
  width: 1062px;
  height: 658px;
  background: #cbe5dd;
}
.close {
  position: absolute;
  right: 10px;
  top: 11px;
}
.title {
  padding: 18px 0 0 420px;
  height: 69px;
  font-size: 29.500px;
  line-height: 36px;
  font-weight: 700;
}
.row-top {
  display: flex;
  height: 44px;
}
.top-field {
  display: flex;
  justify-content: space-between;
  height: 44px;
}
.f-id {
  width: 128px;
  margin-left: 40px;
}
.f-parcel {
  width: 246px;
  margin-left: 43px;
}
.f-lot {
  width: 293px;
  margin-left: 26px;
}
.f-area {
  width: 223px;
  margin-left: 32px;
}
.top-field .strong {
  padding-top: 8px;
}
.strong {
  font-size: 21.500px;
  line-height: 26px;
  font-weight: 700;
}
.input {
  box-sizing: border-box;
  height: 44px;
  border: 1px solid #adb8b3;
  border-radius: 10px;
  background: #9cafaa;
  color: #0a0f0f;
  font-size: 17px;
  line-height: 47px;
  font-weight: 600;
  text-align: center;
}
.f-id .input {
  width: 91px;
  padding-right: 2px;
}
.f-parcel .input {
  width: 137px;
}
.f-lot .input {
  width: 154px;
}
.f-area .input {
  width: 160px;
}
.group {
  height: 134px;
}
.g-name {
  padding-top: 17px;
}
.group .strong {
  padding-left: 50.500px;
}
.fields {
  display: grid;
  grid-template-columns: 255px 255px 255px;
  column-gap: 52px;
  padding: 9px 0 0 93px;
}
.field:nth-child(3) {
  margin-left: 8px;
  width: 255px;
}
.sub {
  display: block;
  height: 32px;
  padding-left: 6px;
  font-size: 19.500px;
  line-height: 27px;
  font-weight: 400;
  color: #37454a;
}
.last-row {
  display: flex;
  margin-top: 11px;
  height: 134px;
}
.g-coords {
  width: 673px;
}
.status {
  width: 320px;
}
.radios {
  display: flex;
  gap: 57px;
  padding: 44px 0 0 59px;
}
.radio {
  display: flex;
  align-items: center;
  height: 26px;
  font-size: 19px;
  line-height: 26px;
  font-weight: 600;
  color: #050a0a;
}
.r-paid {
  width: 66px;
}
.radio i {
  box-sizing: border-box;
  flex: none;
  width: 15px;
  height: 15px;
  margin: -1px 7px 0 0;
  border: 2px solid #7c8b94;
  border-radius: 50%;
}
.radio i.on {
  background: #0f8388;
}
.save {
  display: block;
  width: 176px;
  height: 46px;
  margin: 23px 0 0 448px;
  padding-bottom: 5px;
  border-radius: 23px;
  background: #101b1a;
  color: #fff;
  font-size: 21px;
  font-weight: 400;
}
.credit {
  position: absolute;
  left: 740px;
  top: 880px;
  white-space: nowrap;
  color: #000089;
  font: 9px/14px "Liberation Sans", Arial, sans-serif;
}
.actions {
  position: absolute;
  left: 71.500px;
  top: 834px;
  display: flex;
  gap: 12px;
}
.pill {
  display: flex;
  align-items: center;
  justify-content: center;
  height: 46px;
  border-radius: 23px;
  background: #0f8388;
  color: #e0f3ee;
}
.manage {
  width: 176px;
  padding-bottom: 2px;
  box-sizing: border-box;
  font-size: 17px;
  font-weight: 400;
}
.small {
  width: 61px;
}
.tools {
  position: absolute;
  left: 1013.500px;
  top: 823px;
  width: 324px;
  height: 57px;
  background: #2d3433;
}
</style>
